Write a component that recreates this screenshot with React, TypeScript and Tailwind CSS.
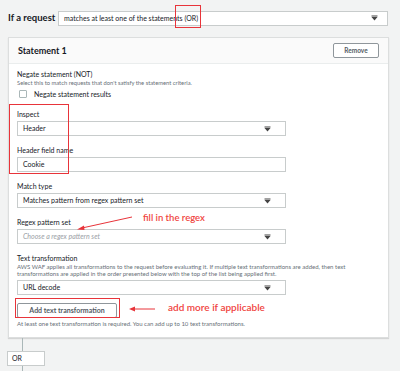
import React from 'react'

const font = { fontFamily: 'Lato, "Open Sans", Arial, sans-serif' }

function Caret() {
  return (
    <svg width="7" height="6" viewBox="0 0 7 6" aria-hidden="true">
      <path d="M0.5 0.5h6v1h-6z M0.5 2h6L3.5 5.5z" fill="#444" />
    </svg>
  )
}

function Select({ value, placeholder }: { value?: string; placeholder?: string }) {
  return (
    <div className="flex h-[15px] w-[269px] items-center justify-between border border-[#c8cccc] bg-white pl-[5px] pr-[14px]">
      {value ? (
        <span className="text-[7px] text-[#16191f]">{value}</span>
      ) : (
        <span className="text-[7px] italic text-[#9aa0a6]">{placeholder}</span>
      )}
      <Caret />
    </div>
  )
}

function Field({ label, children }: { label: string; children: React.ReactNode }) {
  return (
    <div className="flex flex-col gap-[2px]">
      <span className="text-[7px] leading-[10px] text-[#16191f]">{label}</span>
      {children}
    </div>
  )
}

export default function App() {
  return (
    <div className="relative h-[371px] w-[400px] overflow-hidden bg-[#f2f3f3] text-[#16191f]" style={font}>
      {/* top rule */}
      <div className="flex h-[37px] items-center pl-[8px] pb-[1px]">
        <span className="w-[50px] shrink-0 whitespace-nowrap text-[9.5px] font-bold">If a request</span>
        <div className="flex h-[15px] w-[330px] items-center justify-between border border-[#c8cccc] bg-white pl-[5px] pr-[9px]">
          <span className="text-[7px]">matches at least one of the statements (OR)</span>
          <Caret />
        </div>
      </div>

      {/* statement card */}
      <div className="ml-[8px] w-[381px] border border-[#dcdede] bg-white shadow-[0_1px_1px_rgba(0,0,0,0.12)]">
        <div className="flex h-[26px] items-center justify-between border-b border-[#eaeded] bg-[#fafafa] pl-[9px] pr-[9px]">
          <span className="text-[9px] font-bold">Statement 1</span>
          <button className="flex h-[15px] w-[46px] items-center justify-center rounded-[2px] border border-[#8f969b] bg-white text-[6.5px] font-bold text-[#545b64]">
            Remove
          </button>
        </div>

        <div className="flex flex-col pl-[8px] pb-[9px] pt-[6px]">
          <span className="text-[7px] leading-[9px]">Negate statement (NOT)</span>
          <span className="text-[5.8px] leading-[7px] text-[#687078]">Select this to match requests that don't satisfy the statement criteria.</span>
          <div className="mt-[3px] flex h-[10px] items-center gap-[7px] pl-[2px]">
            <div className="h-[8px] w-[8px] rounded-[1px] border border-[#aab7b8] bg-white" />
            <span className="text-[7px]">Negate statement results</span>
          </div>

          <div className="mt-[10px] flex flex-col gap-[9px]">
            <Field label="Inspect">
              <Select value="Header" />
            </Field>
            <Field label="Header field name">
              <div className="flex h-[15px] w-[269px] items-center border border-[#c8cccc] bg-white pl-[5px] text-[7px]">Cookie</div>
            </Field>
            <Field label="Match type">
              <Select value="Matches pattern from regex pattern set" />
            </Field>
            <Field label="Regex pattern set">
              <Select placeholder="Choose a regex pattern set" />
            </Field>
            <div className="flex flex-col">
              <span className="text-[7px] leading-[10px]">Text transformation</span>
              <span className="w-[332px] text-[6px] leading-[7px] text-[#687078]">
                AWS WAF applies all transformations to the request before evaluating it. If multiple text transformations are added, then text transformations are applied in the order presented below with the top of the list being applied first.
              </span>
              <div className="mt-[3px]">
                <Select value="URL decode" />
              </div>
            </div>
          </div>

          <div className="mt-[8px] flex">
            <button className="flex h-[15px] w-[100px] items-center justify-center rounded-[2px] border border-[#8f969b] bg-white text-[7px] font-bold text-[#545b64]">
              Add text transformation
            </button>
          </div>
          <span className="mt-[2px] text-[6px] leading-[8px] text-[#687078]">At least one text transformation is required. You can add up to 10 text transformations.</span>
        </div>
      </div>

      {/* OR connector */}
      <div className="ml-[22px] h-[13px] w-px bg-[#aab7b8]" />
      <div className="ml-[7px] flex h-[15px] w-[38px] items-center border border-[#c8cccc] bg-white pl-[4px] text-[7px]">OR</div>
      <div className="ml-[22px] h-[10px] w-px bg-[#aab7b8]" />

      {/* annotations */}
      <div className="absolute left-[175px] top-[5px] h-[23px] w-[26px] border-[1.5px] border-[#e8343a]" />
      <div className="absolute left-[9px] top-[104px] h-[70px] w-[60px] border-[1.5px] border-[#e8343a]" />
      <div className="absolute left-[15px] top-[298px] h-[20px] w-[105px] border-[1.5px] border-[#e8343a]" />

      <span className="absolute left-[143px] top-[212px] text-[9.5px] font-semibold leading-[12px] text-[#f0443e]">fill in the regex</span>
      <span className="absolute left-[168px] top-[301px] text-[10px] font-semibold leading-[12px] text-[#f0443e]">add more if applicable</span>

      <svg className="absolute left-0 top-0" width="400" height="371" aria-hidden="true">
        <line x1="132" y1="217" x2="82" y2="228" stroke="#e8343a" strokeWidth="1" />
        <path d="M77 229.5 L84 225.5 L84.5 230 Z" fill="#e8343a" />
        <line x1="155" y1="309" x2="134" y2="309" stroke="#e8343a" strokeWidth="1" />
        <path d="M129 309 L135 306.5 L135 311.5 Z" fill="#e8343a" />
      </svg>
    </div>
  )
}
